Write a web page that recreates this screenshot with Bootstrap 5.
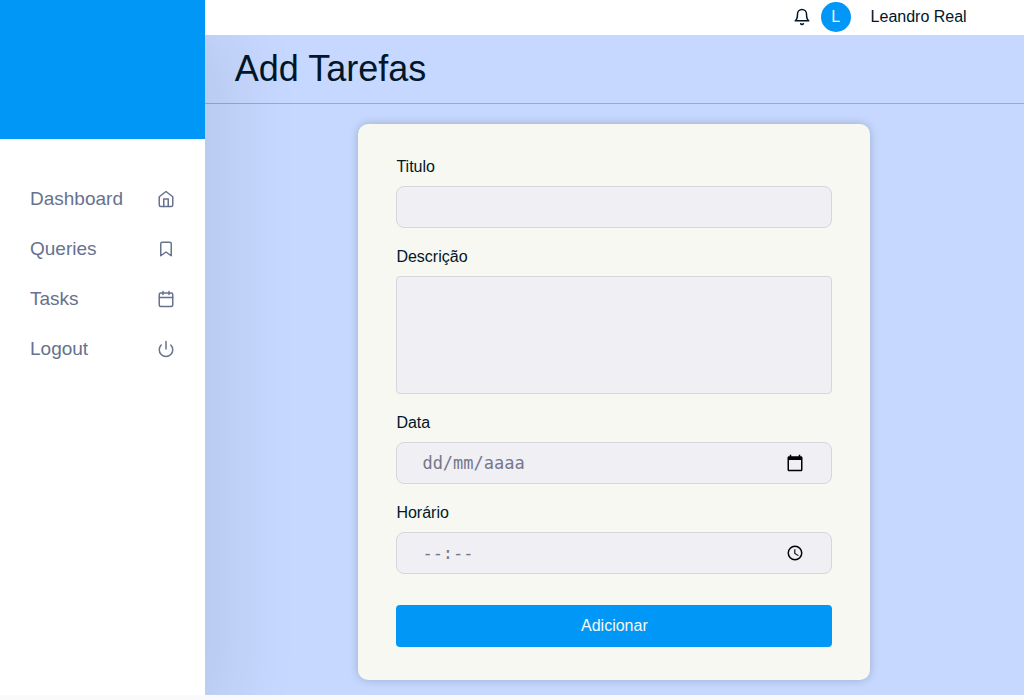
<!DOCTYPE html>
<html lang="pt-BR">
<head>
<meta charset="utf-8">
<meta name="viewport" content="width=device-width, initial-scale=1">
<title>Add Tarefas</title>
<link href="https://cdn.jsdelivr.net/npm/bootstrap@5.3.0/dist/css/bootstrap.min.css" rel="stylesheet">
<style>
  body { background: #fafafa; color: #011627; font-family: "Liberation Sans", Arial, sans-serif; font-size: 16px; line-height: 24px; }
  .side-panel { width: 20%; background: #fff; box-shadow: 25px 25px 75px rgba(0, 0, 0, .08); z-index: 1; }
  .side-brand { height: 139px; background: #0197f6; }
  .side-menu { margin-top: 35px; padding: 0 30px; }
  .side-menu a { height: 50px; padding: 0; color: #66728e; font-size: 19px; }
  .line-icon { width: 18px; height: 18px; fill: none; stroke: currentColor; stroke-width: 2; stroke-linecap: round; stroke-linejoin: round; flex: none; }
  .page-area { width: 80%; background: #c6d8ff; }
  .top-bar { height: 35px; background: #fff; padding: 0 7% 2px; z-index: 2; }
  .bell-btn { color: #011627; line-height: 0; }
  .avatar { width: 30px; height: 30px; background: #0197f6; color: #f7f9f2; margin: 0 20px 0 10px; }
  .page-title { font-size: 36px; line-height: 44px; font-weight: 400; margin: 0; padding: 12px 30px; border-bottom: 1px solid #9aa8cb; }
  .task-card { width: 62.5%; margin: 20px auto 15px; padding: 31px 38px 33px; background: #f7f8f2; border-radius: 10px; box-shadow: 0 0 10px rgba(0, 0, 0, .2); }
  .field-group { margin-bottom: 17px; }
  .field-group label { display: block; margin-bottom: 7px; }
  .task-card .form-control { height: 42px; padding: 8px 25px; background: #f0eff4; border-color: #d6d6dc; border-radius: 8px; color: #011627; }
  .task-card textarea.form-control { height: 118px; border-radius: 4px; resize: none; }
  .task-card .mono-field { font-family: "DejaVu Sans Mono", monospace; font-size: 17px; }
  .mono-field::placeholder { color: #75788c; opacity: 1; }
  .picker-btn { right: 28px; color: #000; line-height: 0; }
  .picker-btn svg { width: 18px; height: 18px; fill: currentColor; }
  .add-btn { height: 42px; margin-top: 14px; background: #0197f6; color: #f7f9f2; border: 0; border-radius: 4px; }
  .add-btn:hover { background: #0186dc; color: #fff; }
</style>
</head>
<body>
<div class="d-flex">
  <aside class="side-panel position-relative flex-shrink-0">
    <div class="side-brand"></div>
    <nav class="side-menu nav flex-column" aria-label="Menu">
      <a class="nav-link d-flex align-items-center justify-content-between" href="#dashboard">Dashboard
        <svg class="line-icon" viewBox="0 0 24 24"><path d="M3 9l9-7 9 7v11a2 2 0 0 1-2 2H5a2 2 0 0 1-2-2z"/><path d="M9 22V12h6v10"/></svg></a>
      <a class="nav-link d-flex align-items-center justify-content-between" href="#queries">Queries
        <svg class="line-icon" viewBox="0 0 24 24"><path d="M19 21l-7-5-7 5V5a2 2 0 0 1 2-2h10a2 2 0 0 1 2 2z"/></svg></a>
      <a class="nav-link d-flex align-items-center justify-content-between" href="#tasks">Tasks
        <svg class="line-icon" viewBox="0 0 24 24"><rect x="3" y="4" width="18" height="18" rx="2"/><path d="M16 2v4M8 2v4M3 10h18"/></svg></a>
      <a class="nav-link d-flex align-items-center justify-content-between" href="#logout">Logout
        <svg class="line-icon" viewBox="0 0 24 24"><path d="M18.36 6.64a9 9 0 1 1-12.73 0M12 2v10"/></svg></a>
    </nav>
  </aside>
  <div class="page-area">
    <header class="top-bar position-relative d-flex align-items-center justify-content-end">
      <button type="button" class="bell-btn btn border-0 p-0" aria-label="Notificações">
        <svg class="line-icon" viewBox="0 0 24 24"><path d="M18 8A6 6 0 0 0 6 8c0 7-3 9-3 9h18s-3-2-3-9M13.73 21a2 2 0 0 1-3.46 0"/></svg>
      </button>
      <span class="avatar rounded-circle d-flex align-items-center justify-content-center">L</span>
      <span>Leandro Real</span>
    </header>
    <main>
      <h1 class="page-title">Add Tarefas</h1>
      <form class="task-card">
        <div class="field-group">
          <label for="titulo">Titulo</label>
          <input class="form-control" type="text" id="titulo">
        </div>
        <div class="field-group">
          <label for="descricao">Descrição</label>
          <textarea class="form-control" id="descricao"></textarea>
        </div>
        <div class="field-group">
          <label for="data">Data</label>
          <div class="position-relative">
            <input class="form-control mono-field" type="text" id="data" placeholder="dd/mm/aaaa">
            <button type="button" class="picker-btn btn border-0 p-0 position-absolute top-50 translate-middle-y" aria-label="Abrir calendário">
              <svg viewBox="0 0 24 24"><path d="M20 3h-1V1h-2v2H7V1H5v2H4c-1.100 0-2 .9-2 2v16c0 1.100.9 2 2 2h16c1.100 0 2-.9 2-2V5c0-1.100-.9-2-2-2zm0 18H4V8h16v13z"/></svg>
            </button>
          </div>
        </div>
        <div class="field-group">
          <label for="horario">Horário</label>
          <div class="position-relative">
            <input class="form-control mono-field" type="text" id="horario" placeholder="--:--">
            <button type="button" class="picker-btn btn border-0 p-0 position-absolute top-50 translate-middle-y" aria-label="Abrir relógio">
              <svg viewBox="0 0 24 24"><path d="M12 2a10 10 0 1 0 0 20 10 10 0 0 0 0-20zm0 18a8 8 0 1 1 0-16 8 8 0 0 1 0 16zM12.500 7H11v6l5.200 3.100.8-1.200-4.500-2.700z"/></svg>
            </button>
          </div>
        </div>
        <button type="submit" class="add-btn btn w-100">Adicionar</button>
      </form>
    </main>
  </div>
</div>
<script src="https://cdn.jsdelivr.net/npm/bootstrap@5.3.0/dist/js/bootstrap.bundle.min.js"></script>
</body>
</html>
